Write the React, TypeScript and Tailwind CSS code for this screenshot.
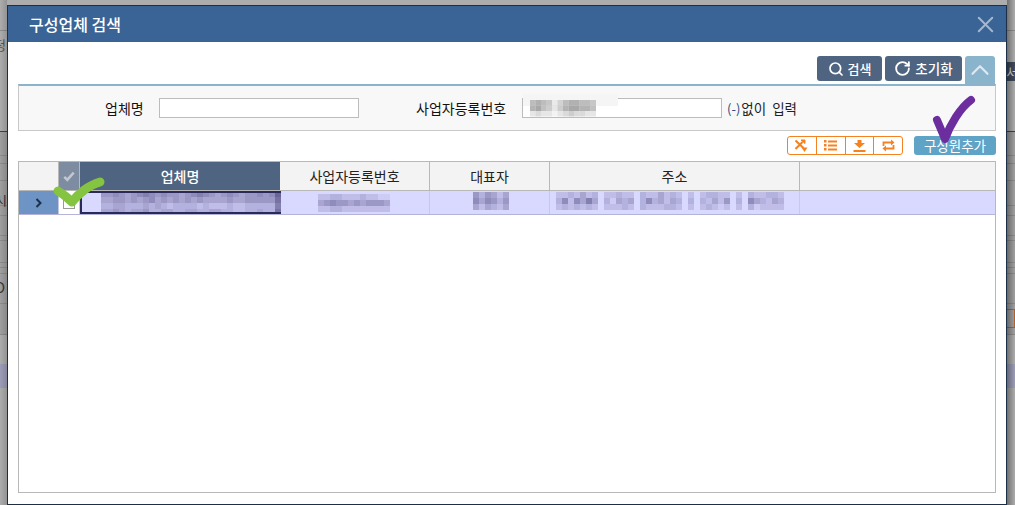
import { ChevronUp, RotateCw, Search, X } from 'lucide-react';

const font = { fontFamily: '"Noto Sans CJK KR", "Liberation Sans", sans-serif' };

const backLines = [30, 155, 163, 180, 205, 215, 235, 240, 262, 267, 273, 303, 334];

// pixelated blur that hides company data in the reference
function Mosaic({ rows, color, size = 6 }: { rows: string[]; color: string; size?: number }) {
  const width = Math.max(...rows.map((r) => r.length)) * size;
  return (
    <svg width={width} height={rows.length * size} className="block shrink-0">
      {rows.map((row, y) =>
        row.split('').map((c, x) =>
          c === '.' ? null : (
            <rect key={`${x}-${y}`} x={x * size} y={y * size} width={size} height={size} fill={color} opacity={Number(c) / 9} />
          ),
        ),
      )}
    </svg>
  );
}

function HeaderCell({ width, label }: { width: string; label: string }) {
  return <div className={`${width} flex items-center justify-center border-r border-[#b8b8b8] bg-[#f3f3f3] text-[14px] text-[#222]`}>{label}</div>;
}

function OrangeCell({ children, last }: { children: React.ReactNode; last?: boolean }) {
  return <div className={`flex items-center justify-center text-[#f58220] ${last ? 'w-[28px]' : 'w-[29px] border-r border-[#f58220]'}`}>{children}</div>;
}

function ShuffleIcon() {
  return (
    <svg width="13" height="13" viewBox="0 0 13 13" fill="none" stroke="currentColor" strokeWidth="2">
      <path d="M0.500 1.500l8 7.500M0.500 10l7-7" />
      <path d="M6 1h4v3.500z" fill="currentColor" strokeWidth="1" />
      <path d="M6.500 8.500h6L9.500 13z" fill="currentColor" stroke="none" />
    </svg>
  );
}

function ListIcon() {
  return (
    <svg width="13" height="11" viewBox="0 0 13 11" fill="currentColor">
      <rect x="0" y="0" width="2.500" height="2.500" />
      <rect x="0" y="4" width="2.500" height="2.500" />
      <rect x="0" y="8" width="2.500" height="2.500" />
      <rect x="4" y="0.500" width="9" height="2" />
      <rect x="4" y="4.500" width="9" height="2" />
      <rect x="4" y="8.500" width="9" height="2" />
    </svg>
  );
}

function DownloadIcon() {
  return (
    <svg width="13" height="12" viewBox="0 0 13 12" fill="currentColor">
      <path d="M4.500 0h4v3h3.500L6.500 8 1 3h3.500z" />
      <rect x="0.500" y="10" width="12" height="2" />
    </svg>
  );
}

function RepeatIcon() {
  return (
    <svg width="13" height="13" viewBox="0 0 13 13" fill="none" stroke="currentColor" strokeWidth="1.800">
      <path d="M1.500 7V3.500H9M11.500 6v3.500H4" />
      <path d="M9 0.500L12.500 3.500 9 6.500zM4 6.500L0.500 9.500 4 12.500z" fill="currentColor" stroke="none" />
    </svg>
  );
}

export default function App() {
  return (
    <div className="relative h-[505px] w-[1015px] overflow-hidden bg-[#adadad] pl-[7px] pt-[5px]" style={font}>
      {/* dimmed page behind the dialog */}
      <div className="absolute left-0 top-[131px] h-[203px] w-[1015px] bg-[#a0a0a0]" />
      {backLines.map((y) => (
        <div key={y} className="absolute left-0 h-px w-[1015px] bg-[#8c8c8c]" style={{ top: y }} />
      ))}
      <div className="absolute left-0 top-[131px] h-px w-[1015px] bg-[#2f4560]" />
      <div className="absolute left-0 top-[364px] h-[24px] w-[1015px] bg-[#9d9db8]" />
      <div className="absolute left-[1006px] top-[62px] h-[19px] w-[9px] overflow-hidden bg-[#3e4a5a] text-[13px] leading-[19px] text-[#d8d8d8]">서</div>
      <div className="absolute left-[1006px] top-[309px] h-[19px] w-[9px] border border-[#b5622a]" />
      <span className="absolute -left-[6px] top-[35px] text-[13px] text-[#555]">정</span>
      <span className="absolute -left-[5px] top-[190px] text-[13px] text-[#333]">시</span>
      <span className="absolute -left-[6px] top-[276px] text-[15px] text-[#3a3a3a]">O</span>
      <div className="absolute left-0 top-0 h-[505px] w-[7px] bg-linear-to-l from-black/15 to-transparent" />
      <div className="absolute left-[1007px] top-0 h-[505px] w-[8px] bg-linear-to-r from-black/35 to-transparent" />

      <div className="relative flex h-[500px] w-[1000px] flex-col border border-[#1c2f47] bg-white">
        <div className="flex h-[36px] items-center justify-between bg-[#3a6496] pl-[21px] pr-[7px]">
          <span className="text-[16px] font-medium text-white">구성업체 검색</span>
          <X size={27} strokeWidth={1.7} className="text-[#a3b8d2]" />
        </div>

        <div className="flex flex-1 flex-col pb-[11px] pl-[10px] pr-[10px]">
          <div className="flex h-[42px] items-start justify-end gap-[3px] pr-[1px] pt-[14px]">
            <button className="flex h-[25px] w-[65px] items-center justify-center gap-1 rounded-[3px] bg-[#4f6480] text-[13px] font-medium text-white">
              <Search size={16} strokeWidth={2.6} />
              검색
            </button>
            <button className="flex h-[25px] w-[77px] items-center justify-center gap-1 rounded-[3px] bg-[#4f6480] text-[13.500px] font-medium text-white">
              <RotateCw size={17} strokeWidth={2.6} />
              초기화
            </button>
            <button className="flex h-[28px] w-[30px] items-center justify-center rounded-t-[3px] bg-[#8ab4cc] text-[#dde8f0]">
              <ChevronUp size={30} strokeWidth={1.8} className="shrink-0" />
            </button>
          </div>

          <div className="flex h-[47px] w-[978px] items-center border border-t-2 border-[#c8c8c8] border-t-[#8ab4cc] bg-[#f8f8f8] text-[14px] text-[#111]">
            <span className="ml-[86px] w-[39px] whitespace-nowrap">업체명</span>
            <input className="ml-[15px] h-[20px] w-[200px] border border-[#bcbcbc] bg-white" />
            <span className="ml-[57px] w-[91px] whitespace-nowrap">사업자등록번호</span>
            <div className="relative ml-[15px] h-[20px] w-[200px] border border-[#bcbcbc] bg-white">
              <div className="absolute -top-[5px] left-0 h-[12px] w-[95px] bg-[#f5f5f5]" />
              <div className="absolute left-[7px] top-[1px]">
                <Mosaic color="#8f8f8f" rows={['565413566554', '675424677665', '232212343322']} size={5.500} />
              </div>
            </div>
            <span className="ml-[5px] whitespace-nowrap text-[13.500px] text-[#222]">
              <span className="mr-[1px] text-[13px] text-[#2a4a80]">(-)</span>없이&nbsp;&nbsp;입력
            </span>
          </div>

          <div className="flex h-[30px] items-start justify-end pt-[5px]">
            <div className="flex h-[19px] w-[116px] rounded-[3px] border border-[#f58220] bg-white">
              <OrangeCell><ShuffleIcon /></OrangeCell>
              <OrangeCell><ListIcon /></OrangeCell>
              <OrangeCell><DownloadIcon /></OrangeCell>
              <OrangeCell last><RepeatIcon /></OrangeCell>
            </div>
            <button className="ml-[11px] h-[19px] w-[82px] whitespace-nowrap rounded-[3px] bg-[#5fa3c7] text-[13.500px] leading-[19px] text-white">구성원추가</button>
          </div>

          <div className="flex w-[978px] flex-1 flex-col border border-[#b8b8b8]">
            <div className="flex h-[29px] border-b border-[#b8b8b8]">
              <div className="w-[39px] bg-[#f3f3f3]" />
              <div className="flex w-[22px] items-center justify-center border-x border-[#b8b8b8] bg-[#7d8ca0]">
                <svg width="12" height="11" viewBox="0 0 14 12" fill="none" stroke="#c2c7cf" strokeWidth="3">
                  <path d="M1.500 6.500l3.500 3.500 7.500-8.500" />
                </svg>
              </div>
              <div className="flex w-[200px] items-center justify-center bg-[#4f6480] text-[14px] font-medium text-white">업체명</div>
              <HeaderCell width="w-[150px]" label="사업자등록번호" />
              <HeaderCell width="w-[120px]" label="대표자" />
              <HeaderCell width="w-[250px]" label="주소" />
              <div className="flex-1 bg-[#f3f3f3]" />
            </div>

            <div className="flex h-[24px] border-b border-[#b4b4d8] bg-[#d9d9ff]">
              <div className="flex w-[39px] items-center justify-center bg-[#6d94c4] text-[#1c2f47]">
                <svg width="7" height="10" viewBox="0 0 7 10" fill="none" stroke="currentColor" strokeWidth="2">
                  <path d="M1.500 1l4 4-4 4" />
                </svg>
              </div>
              <div className="flex w-[22px] items-center justify-center border-x border-[#c4c4e4] bg-white">
                <div className="h-[12px] w-[12px] border border-[#9a9a9a] bg-white" />
              </div>
              <div className="flex w-[201px] items-center overflow-hidden border-y-2 border-l-2 border-[#2a2a5a] pl-[19px]">
                <Mosaic color="#6a6498" rows={['556545676565545676545654556569', '445545456454545454444544555558', '334433343432333323222322333337', '445434453344334433443322334338']} size={6} />
              </div>
              <div className="flex w-[149px] items-center border-r border-[#c8c8ec] pl-[37px]">
                <Mosaic color="#6a6498" rows={['223322232211', '456554545554', '223322222222']} size={6} />
              </div>
              <div className="flex w-[120px] items-center justify-center border-r border-[#c8c8ec] pb-[3px] pl-[3px]">
                <Mosaic color="#6a6498" rows={['535424', '646535', '424324']} size={6} />
              </div>
              <div className="flex w-[250px] items-center border-r border-[#c8c8ec] pb-[3px] pl-[6px]">
                <Mosaic color="#6a6498" rows={['2232423.22322.3224232.2.23322.2.322332', '3626474.31434.3634243.3.32425.3.643243', '2323232.22232.3222332.2.23212.2.312222']} size={6} />
              </div>
              <div className="flex-1" />
            </div>
          </div>
        </div>
      </div>

      {/* check marks drawn on top of the screenshot */}
      <svg className="pointer-events-none absolute left-[45px] top-[170px]" width="65" height="40" viewBox="0 0 65 40" fill="none" stroke="#84c441" strokeWidth="9" strokeLinecap="round" strokeLinejoin="round">
        <path d="M13 21c5 3 10 7 14 11C33 24 44 15 55 12" />
      </svg>
      <svg className="pointer-events-none absolute left-[925px] top-[90px]" width="55" height="60" viewBox="0 0 55 60" fill="none" stroke="#6c2e9e" strokeWidth="8" strokeLinecap="round" strokeLinejoin="round">
        <path d="M12 30c3 7 6 14 8 19C25 35 35 18 46 10" />
      </svg>
    </div>
  );
}
